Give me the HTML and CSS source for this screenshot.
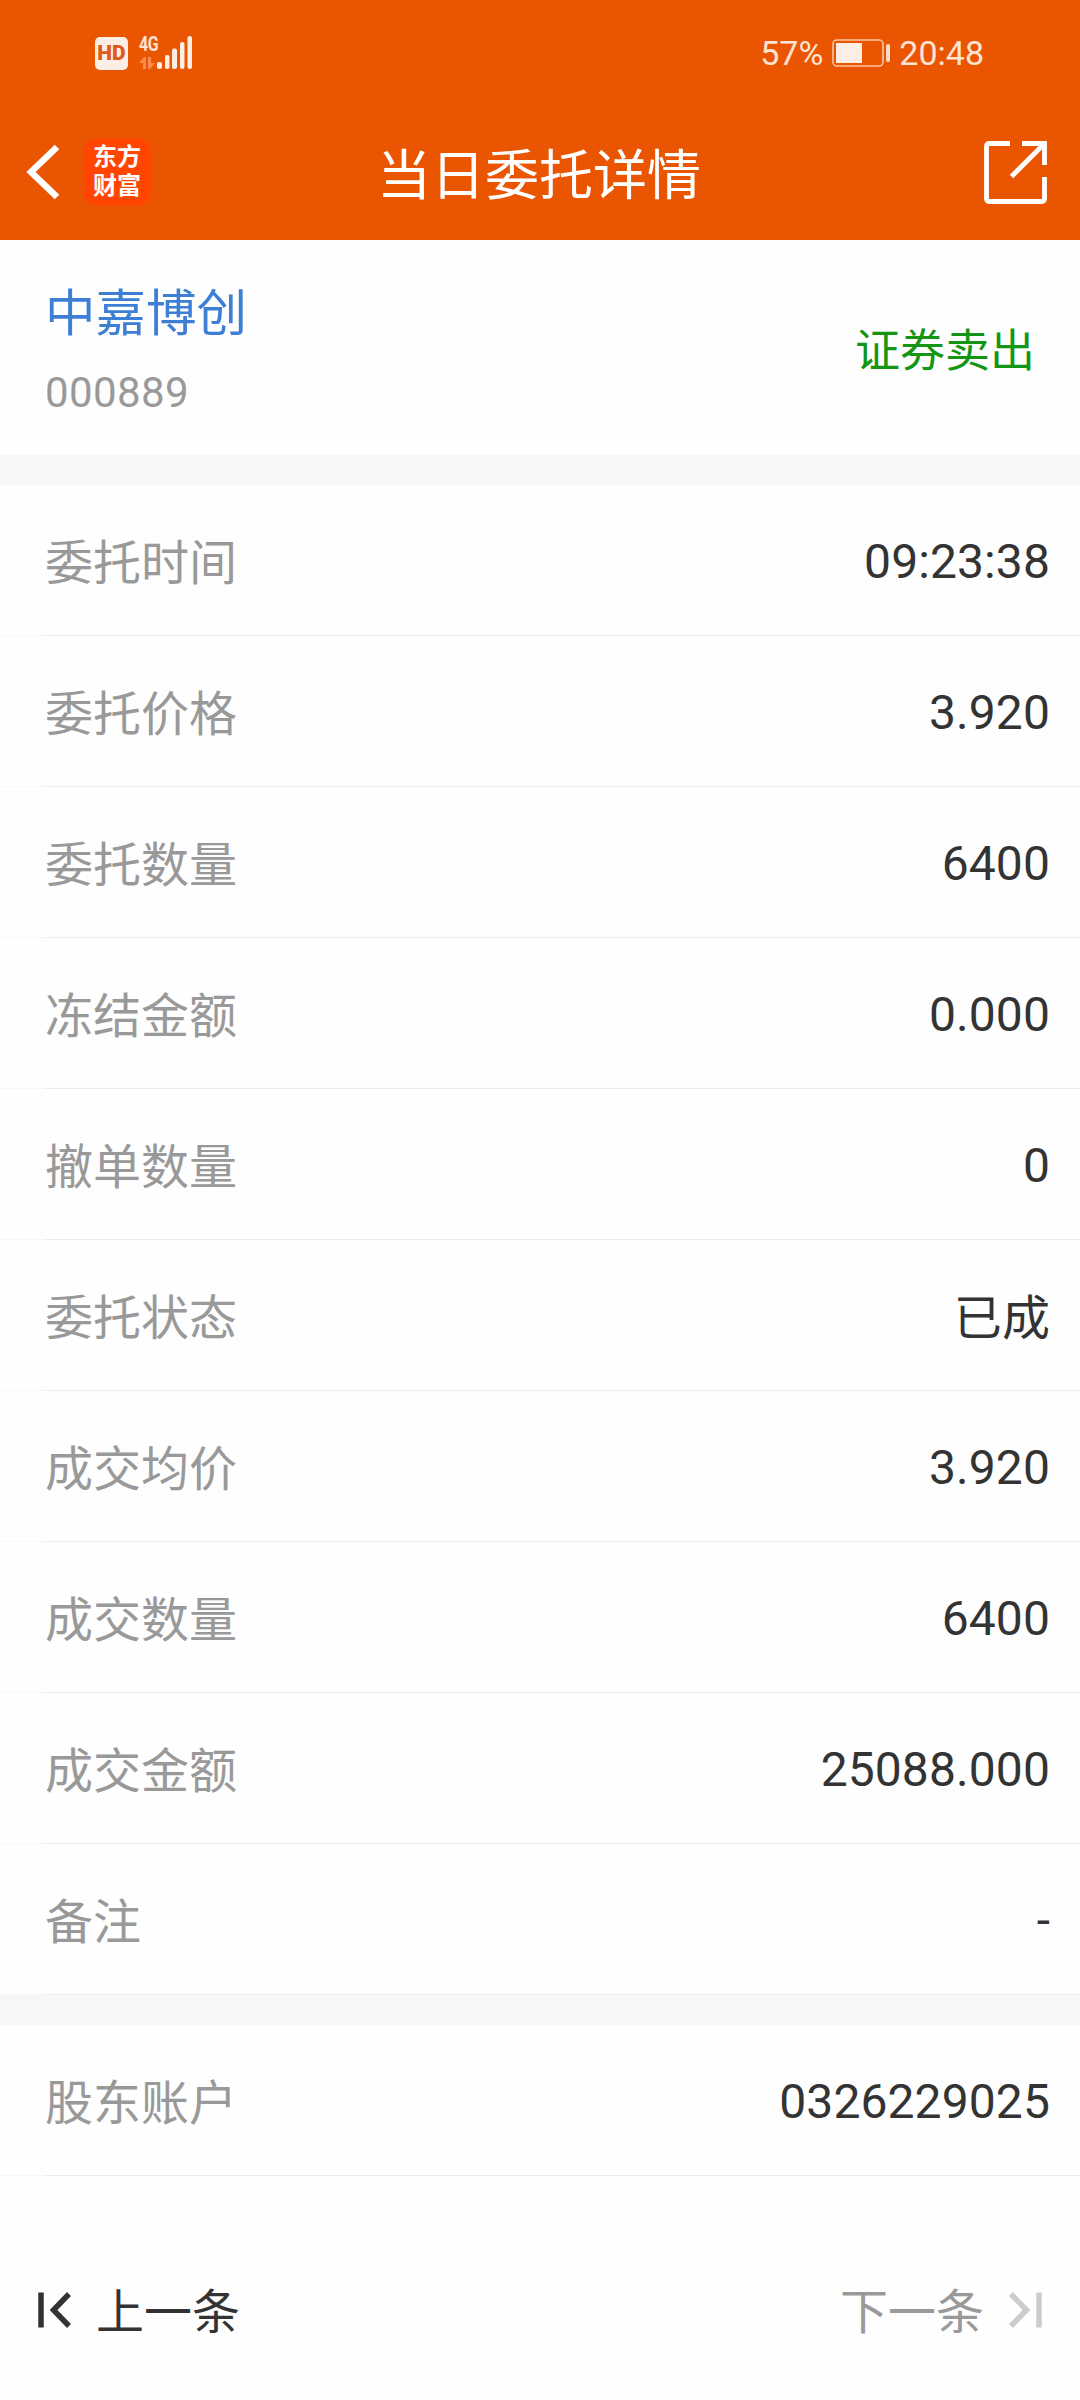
FILE: index.html
```html
<!DOCTYPE html>
<html lang="zh-CN">
<head>
  <meta charset="UTF-8">
  <meta name="viewport" content="width=device-width, initial-scale=1.0">
  <title>当日委托详情</title>
  <link rel="stylesheet" href="styles.css">
</head>
<body>
  <header>
    <div class="status-bar">
      <div class="status-left">
        <span class="hd">HD</span>
        <div class="network">
          <span class="net-type">4G</span>
          <svg class="signal" width="54" height="34" viewBox="0 0 54 34">
            <path fill="#fb8a4c" d="M0 27l5-6h2v12H4v-6zM9 21h3v6h4l-5 6H9z"/>
            <g fill="#fdeee5">
              <rect x="18" y="26" width="5" height="7" rx="2"/>
              <rect x="26" y="19" width="4.500" height="14" rx="2"/>
              <rect x="33" y="12.500" width="5" height="20.500" rx="2"/>
              <rect x="41" y="6" width="4.500" height="27" rx="2"/>
              <rect x="48.500" y="0" width="4.500" height="33" rx="2"/>
            </g>
          </svg>
        </div>
      </div>
      <div class="status-right">
        <span>57%</span>
        <svg width="58" height="28" viewBox="0 0 58 28">
          <rect x="1" y="1" width="50" height="26" rx="4" fill="none" stroke="#fbc5a2" stroke-width="1.600"/>
          <rect x="4" y="4" width="26" height="20" fill="#fdeee5"/>
          <rect x="54" y="5" width="4" height="18" rx="2" fill="#fbdcc8"/>
        </svg>
        <span class="clock">20:48</span>
      </div>
    </div>
    <nav class="title-bar">
      <div class="nav-left">
        <svg width="33" height="56" viewBox="0 0 33 56">
          <path d="M31 3L5 28l26 25" fill="none" stroke="#fff" stroke-width="6.500"/>
        </svg>
        <div class="logo"><span>东方</span><span>财富</span></div>
      </div>
      <h1>当日委托详情</h1>
      <svg class="share" width="63" height="63" viewBox="0 0 63 63">
        <path d="M26 2.500H5a2.500 2.500 0 0 0-2.500 2.500v53a2.500 2.500 0 0 0 2.500 2.500h53a2.500 2.500 0 0 0 2.500-2.500V36M38 2.500h22.500V24M60 3L27.500 35.500" fill="none" stroke="#fff" stroke-width="4.800"/>
      </svg>
    </nav>
  </header>

  <section class="stock">
    <div>
      <p class="stock-name">中嘉博创</p>
      <p class="stock-code">000889</p>
    </div>
    <span class="side">证券卖出</span>
  </section>

  <dl class="group">
    <div class="row"><dt>委托时间</dt><dd>09:23:38</dd></div>
    <div class="row"><dt>委托价格</dt><dd>3.920</dd></div>
    <div class="row"><dt>委托数量</dt><dd>6400</dd></div>
    <div class="row"><dt>冻结金额</dt><dd>0.000</dd></div>
    <div class="row"><dt>撤单数量</dt><dd>0</dd></div>
    <div class="row"><dt>委托状态</dt><dd class="cjk">已成</dd></div>
    <div class="row"><dt>成交均价</dt><dd>3.920</dd></div>
    <div class="row"><dt>成交数量</dt><dd>6400</dd></div>
    <div class="row"><dt>成交金额</dt><dd>25088.000</dd></div>
    <div class="row"><dt>备注</dt><dd>-</dd></div>
  </dl>

  <dl class="group">
    <div class="row"><dt>股东账户</dt><dd>0326229025</dd></div>
  </dl>

  <footer>
    <a class="prev">
      <svg width="34" height="38" viewBox="0 0 34 38">
        <path d="M5 1.500v35M33 3L17.500 19 33 35" fill="none" stroke="currentColor" stroke-width="5.500"/>
      </svg>
      <span>上一条</span>
    </a>
    <a class="next">
      <span>下一条</span>
      <svg width="34" height="38" viewBox="0 0 34 38">
        <path d="M29 1.500v35M1 3l15.500 16L1 35" fill="none" stroke="currentColor" stroke-width="5.500"/>
      </svg>
    </a>
  </footer>
</body>
</html>
```
FILE: styles.css
```css
* { box-sizing: border-box; margin: 0; padding: 0; }
body {
  width: 1080px;
  height: 2400px;
  display: flex;
  flex-direction: column;
  background-color: #fefefe;
  color: #333;
  font-family: Roboto, "Noto Sans CJK SC", sans-serif;
  font-size: 48px;
}
svg { display: block; flex: none; overflow: visible; }

header { height: 240px; background-color: #ea5502; color: #fff; }
.status-bar {
  height: 106px;
  padding: 0 96px 0 95px;
  display: flex;
  justify-content: space-between;
  align-items: center;
  color: #fde3d2;
}
.status-left { display: flex; align-items: center; gap: 11px; }
.hd {
  width: 33px;
  height: 33px;
  border-radius: 5px;
  background-color: #fdeee5;
  color: #dd5b15;
  font-size: 21px;
  font-weight: 900;
  line-height: 33px;
  text-align: center;
}
.network { position: relative; }
.net-type {
  position: absolute;
  left: 0;
  top: -2px;
  font-size: 21px;
  font-weight: 700;
  line-height: 20px;
  letter-spacing: -0.5px;
  transform: scaleX(0.76);
  transform-origin: left;
}
.status-right { display: flex; align-items: center; font-size: 34px; }
.status-right svg { margin: 0 9px 0 9px; }

.title-bar {
  height: 134px;
  padding: 0 33px 2px 26px;
  display: grid;
  grid-template-columns: 1fr auto 1fr;
  align-items: center;
}
.nav-left { display: flex; align-items: center; gap: 24px; }
.logo {
  width: 68px;
  height: 68px;
  padding-top: 5px;
  border-radius: 15px;
  background-color: #ff4500;
  font-size: 24px;
  font-weight: 700;
  text-align: center;
}
.logo span { display: block; height: 29px; line-height: 29px; }
h1 { font-size: 54px; font-weight: 400; line-height: 80px; padding: 10px 0 0 5px; }
.share { justify-self: end; }

.stock {
  height: 215px;
  padding: 5px 45px 0;
  display: flex;
  justify-content: space-between;
  align-items: center;
}
.stock-name { color: #3c7fd4; font-size: 50.5px; line-height: 74px; }
.stock-code { color: #999; font-size: 42px; line-height: 60px; letter-spacing: 0.4px; margin-top: 12px; }
.side { color: #149614; font-size: 45px; padding-bottom: 5px; }

.group { border-top: 30px solid #f6f7f9; }
.row {
  height: 151px;
  padding: 0 30px 0 45px;
  display: flex;
  justify-content: space-between;
  align-items: center;
  /* divider is fainter under the left inset */
  background: linear-gradient(90deg, #f7f7f7 45px, #ececec 45px) bottom / 100% 1px no-repeat;
}
dt { color: #999; padding-bottom: 4px; }
dd { letter-spacing: 0.1px; padding-top: 2px; }
dd.cjk { padding: 0 0 4px; }

footer {
  flex: 1;
  padding: 44px 36px 0;
  display: flex;
  justify-content: space-between;
  align-items: center;
}
footer a { display: flex; align-items: center; gap: 26px; }
footer span { padding-bottom: 4px; }
.next { color: #999; }
.next svg { color: #ccc; }
```
